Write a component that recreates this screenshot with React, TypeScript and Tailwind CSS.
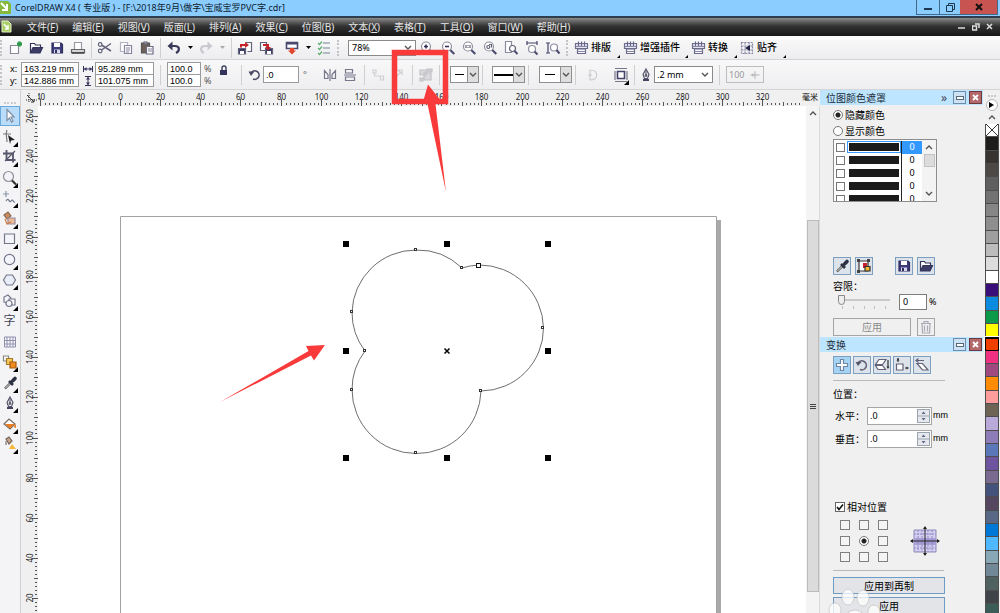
import React, { type ReactNode } from "react";

const FONT = "font-['Noto_Sans','Noto_Sans_CJK_SC',sans-serif]";

function Ico({ children, className = "" }: { children: ReactNode; className?: string }) {
  return (
    <svg viewBox="0 0 16 16" width="16" height="16" fill="none" stroke="#626278" strokeWidth="1.2" aria-hidden="true" className={`shrink-0 ${className}`}>
      {children}
    </svg>
  );
}

const floppy = (
  <>
    <path d="M3 3h9l1.500 1.500V13H3z" fill="#3c3c7a" stroke="#2e2e5e" />
    <path d="M5 3h6v4H5z" fill="#fff" stroke="none" />
    <path d="M5 9.500h6V13H5z" fill="#d8d8ee" stroke="none" />
    <path d="M6 10h2v3H6z" fill="#2e2e5e" stroke="none" />
  </>
);
const folder = (
  <>
    <path d="M2.500 13V3.500h4l1 1.500h5V8" fill="#fff" stroke="#33335c" />
    <path d="M2.500 13l2.500-5.500h9.500L12 13z" fill="#3c3c66" stroke="#33335c" />
  </>
);
const glass = (
  <>
    <circle cx="7" cy="6.500" r="4.500" fill="#fff" stroke="#8f8f9e" />
    <path d="M10.300 10l4 4" stroke="#4a4a70" strokeWidth="2" />
  </>
);
const dropper = (
  <>
    <path d="M3 13.500L9 7.500" stroke="#555" strokeWidth="2.400" />
    <path d="M3.500 13L8.500 8" stroke="#fff" strokeWidth="0.800" />
    <path d="M7 6l4 4M9.500 7l3-3" stroke="#2b3042" strokeWidth="2.600" />
    <path d="M11 5.500l2-2" stroke="#2b3042" strokeWidth="3.600" strokeLinecap="round" />
  </>
);
const pen = (
  <>
    <path d="M8 2l3 5.500-1.500 4h-3L5 7.500z" fill="#eee" stroke="#55556b" />
    <path d="M8 3v5" />
    <circle cx="8" cy="8.500" r="0.800" fill="#333" />
    <path d="M5 13h6" stroke="#444460" strokeWidth="2" />
  </>
);
const plugin = (
  <>
    <path d="M2.500 3.500h12v5h-12z" fill="#e4e4f2" stroke="#6d6d8c" />
    <path d="M4.500 9h8v4.500h-8z" fill="#f6f6fc" stroke="#6d6d8c" />
    <path d="M5.500 1.500v5M8.500 1.500v5M11.500 1.500v5" stroke="#66668a" />
    <path d="M3 6.500h11M5 11.500h7" stroke="#8a8aa8" />
  </>
);

function Tool({ label, children, corner = false }: { label: string; children: ReactNode; corner?: boolean }) {
  return (
    <button type="button" aria-label={label} className="relative flex h-5 w-5 shrink-0 items-center justify-center">
      <Ico>{children}</Ico>
      {corner && <Corner />}
    </button>
  );
}

function Corner() {
  return (
    <svg width="5" height="5" viewBox="0 0 5 5" aria-hidden="true" className="absolute right-[2px] bottom-0">
      <path d="M5 0v5H0z" fill="#000" />
    </svg>
  );
}

function Caret({ tone = "text-black" }: { tone?: string }) {
  return (
    <button type="button" aria-label="More" className={`flex h-5 w-3 shrink-0 items-center justify-center ${tone}`}>
      <svg width="5" height="3" viewBox="0 0 5 3" aria-hidden="true"><path d="M0 0h5L2.500 3z" fill="currentColor" /></svg>
    </button>
  );
}

const Sep = () => <div className="mx-[3px] h-5 w-px shrink-0 bg-[#cfcfd2]" />;
const Grip = () => <div className="mx-[3px] h-4 w-0 shrink-0 border-l-2 border-dotted border-[#c4c4c8]" />;

function Chevron({ d = "M1 2l3 3 3-3" }: { d?: string }) {
  return (
    <svg width="8" height="7" viewBox="0 0 8 7" fill="none" stroke="#555" strokeWidth="1.400" aria-hidden="true"><path d={d} /></svg>
  );
}

const menus = ["文件(F)", "编辑(E)", "视图(V)", "版面(L)", "排列(A)", "效果(C)", "位图(B)", "文本(X)", "表格(T)", "工具(O)", "窗口(W)", "帮助(H)"];

function TitleBar() {
  return (
    <header className="flex h-[18px] shrink-0 items-start border-b-2 border-[#2c3e50] bg-[#8ccdff]">
      <svg width="12" height="14" viewBox="0 0 12 14" aria-hidden="true">
        <path d="M0 1h8l3 3v10H0z" fill="#86b93c" />
        <path d="M1 3l6 6M7 4v6H2" stroke="#fff" strokeWidth="2" fill="none" />
      </svg>
      <h1 className="ml-[3px] flex-1 truncate text-[9px] leading-4 text-[#0c1c2c]">CorelDRAW X4 ( 专业版 ) - [F:\2018年9月\做字\宝威宝罗PVC字.cdr]</h1>
      <div className="mr-[2px] flex h-[15px] border-x border-b border-[#41698a]">
        <button type="button" aria-label="Minimize" className="flex w-[22px] items-end justify-center pb-1"><span className="h-[2px] w-2 bg-[#1c3850]" /></button>
        <button type="button" aria-label="Restore" className="flex w-[21px] items-center justify-center border-l border-[#41698a]">
          <svg width="9" height="9" viewBox="0 0 9 9" fill="none" stroke="#1c3850" aria-hidden="true"><path d="M2.500 2.500v-2h6v6h-2M.5 2.500h6v6h-6z" /></svg>
        </button>
        <button type="button" aria-label="Close" className="flex w-[37px] items-center justify-center bg-[#c75450]">
          <svg width="8" height="8" viewBox="0 0 8 8" stroke="#111" strokeWidth="2" aria-hidden="true"><path d="M1 1l6 6M7 1L1 7" /></svg>
        </button>
      </div>
    </header>
  );
}

function MenuBar() {
  return (
    <nav className="flex h-[18px] shrink-0 items-center bg-linear-to-b from-[#8c8c8c] via-[#333] via-45% to-[#141414]">
      <svg width="14" height="14" viewBox="0 0 14 14" aria-hidden="true">
        <path d="M2 1h6l3 3v8H2z" fill="#a9cf64" stroke="#e3f2c5" />
        <path d="M4 4l4 5M8 5v4H5" stroke="#fff" fill="none" strokeWidth="1.500" />
      </svg>
      <div className="flex flex-1 gap-[14px] pl-[13px]">
        {menus.map((m) => (
          <button key={m} type="button" className="whitespace-nowrap text-[10px] leading-4 text-[#e6e6e6]">
            {m.slice(0, 3)}<u>{m[3]}</u>)
          </button>
        ))}
      </div>
      <div className="flex gap-[6px] pr-[6px]">
        {["M0 5h7", "M0.500 3h4v4h-4zM3 1h4v4", "M1 1l5 5M6 1L1 6"].map((d, i) => (
          <button key={d} type="button" aria-label={["Minimize document", "Restore document", "Close document"][i]}>
            <svg width="8" height="8" viewBox="0 0 8 8" stroke="#ddd" strokeWidth="1.500" fill="none" aria-hidden="true"><path d={d} /></svg>
          </button>
        ))}
      </div>
    </nav>
  );
}

function PluginButton({ text, width, icon = plugin }: { text: string; width: string; icon?: ReactNode }) {
  return (
    <button type="button" className={`relative flex h-5 shrink-0 items-center gap-[2px] whitespace-nowrap text-[10px] font-medium text-black ${width}`}>
      <Ico>{icon}</Ico>
      {text}
      <svg width="3" height="3" viewBox="0 0 3 3" aria-hidden="true" className="absolute right-[2px] bottom-0"><path d="M3 0v3H0z" /></svg>
    </button>
  );
}

function StandardBar() {
  return (
    <div className="flex h-6 shrink-0 items-center border-b border-[#d4d4d6] bg-linear-to-b from-[#fafafa] to-[#ededf0]">
      <div className="h-4 w-[5px] border-l-2 border-dotted border-[#c4c4c8]" />
      <div className="flex gap-px">
        <Tool label="New"><path d="M3.500 5.500h8v8h-8z" fill="#fff" stroke="#8a8a98" /><path d="M12.500 1.500v5M10 4h5" stroke="#2e9b4a" strokeWidth="2.800" /></Tool>
        <Tool label="Open">{folder}</Tool>
        <Tool label="Save">{floppy}</Tool>
        <Tool label="Print"><path d="M4.500 9V2.500h7V9" fill="#fff" stroke="#9a9aa4" /><path d="M1.500 9.500h13v3h-13z" fill="#d5d5d8" stroke="#666" /><path d="M1.500 13h13" stroke="#444" strokeWidth="1.600" /></Tool>
      </div>
      <Sep />
      <div className="flex gap-px">
        <Tool label="Cut"><path d="M14 3.500L4.500 10M14 11L4.500 5" strokeWidth="1.500" /><circle cx="3.200" cy="4.500" r="1.800" /><circle cx="3.200" cy="11" r="1.800" /></Tool>
        <Tool label="Copy"><path d="M2.500 2.500h7v9h-7z" fill="#fff" stroke="#b3b3c4" /><path d="M6.500 5.500h7v8h-7z" fill="#fff" stroke="#8585a0" /><path d="M8 8h4M8 10h4M8 12h3" stroke="#8585a0" /></Tool>
        <Tool label="Paste"><path d="M2.500 3h8v10h-8z" fill="#6e6058" stroke="#555" /><path d="M5 2h3v2H5z" fill="#bbb" /><path d="M7.500 6.500h6.500v7.500H7.500z" fill="#fff" stroke="#6a6a85" /><path d="M9 9h4M9 11h4" stroke="#8585a0" /></Tool>
      </div>
      <Sep />
      <Tool label="Undo"><path d="M4 6h5c5 0 5 5 1 7" stroke="#3a3a58" strokeWidth="2.200" /><path d="M6.500 1.500v9L1.500 6z" fill="#3a3a58" stroke="none" /></Tool>
      <Caret />
      <Tool label="Redo"><path d="M12 6H7c-5 0-5 5-1 7" stroke="#c9c9cf" strokeWidth="2.200" /><path d="M9.500 1.500v9l5-4.500z" fill="#c9c9cf" stroke="none" /></Tool>
      <Caret tone="text-[#aaa]" />
      <Sep />
      <div className="flex gap-px">
        <Tool label="Import"><path d="M1.500 8.500h7v5.500h-7z" fill="#3c3c66" /><path d="M3 11h4v3H3z" fill="#fff" stroke="none" /><path d="M8.500 2.500h6v9h-4" fill="#fff" /><path d="M4 7.500V5h5" stroke="#c8232b" strokeWidth="2" /><path d="M8 2v6l4-3z" fill="#c8232b" stroke="none" /></Tool>
        <Tool label="Export"><path d="M2.500 2.500h6v8h-6z" fill="#fff" /><path d="M7.500 8.500h7v5.500h-7z" fill="#3c3c66" /><path d="M9 11h4v3H9z" fill="#fff" stroke="none" /><path d="M5 5h5v3" stroke="#c8232b" strokeWidth="2" /><path d="M7 7h6l-3 3.500z" fill="#c8232b" stroke="none" /></Tool>
      </div>
      <div className="ml-[6px]"><Tool label="Launch"><path d="M2.500 2.500h11v6h-11z" fill="#fff" stroke="#4a4a70" strokeWidth="1.600" /><path d="M3 3.500h10" stroke="#4a4a70" strokeWidth="2" /><path d="M6 8h4v2.500h2l-4 4-4-4h2z" fill="#e2472b" stroke="none" /></Tool></div>
      <Caret />
      <Tool label="Options"><path d="M7 3h7M7 8h7M7 13h7" stroke="#b3bcc2" strokeWidth="1.800" /><path d="M2 3l1.500 1.500L6 1.500M2 8l1.500 1.500L6 6.500M2 13l1.500 1.500L6 11.500" stroke="#5fae72" /></Tool>
      <Grip />
      <label className="relative ml-[6px] flex h-4 w-[68px] shrink-0 items-center border border-[#8a8a8a] bg-white">
        <select aria-label="Zoom level" className="h-full w-full appearance-none bg-transparent pl-[3px] text-[9px] leading-3 text-black outline-none"><option>78%</option></select>
        <span className="pointer-events-none absolute right-[3px]"><Chevron /></span>
      </label>
      <div className="ml-px flex gap-px">
        <Tool label="Zoom in">{glass}<path d="M5 6.500h4M7 4.500v4" stroke="#33335c" strokeWidth="1.600" /></Tool>
        <Tool label="Zoom out">{glass}<path d="M5 6.500h4" stroke="#33335c" strokeWidth="1.600" /></Tool>
        <Tool label="Zoom 1:1">{glass}<path d="M5 5v3M9 5v3M7 5v1M7 7v1" /></Tool>
        <Tool label="Zoom to selection">{glass}<circle cx="6.300" cy="7" r="1.500" /><path d="M7 4.500h2.500v3" /></Tool>
        <Tool label="Zoom to page"><path d="M2.500 1.500h6v11h-6z" fill="#fff" stroke="#8d8da0" /><circle cx="9.500" cy="8.500" r="3" fill="#fff" /><path d="M11.500 11l3 3" stroke="#4a4a70" strokeWidth="2" /></Tool>
        <Tool label="Zoom to width"><path d="M3 1v4M13 1v4M3 3h10" stroke="#44446a" /><circle cx="8" cy="9" r="3.500" fill="#fff" stroke="#8d8da0" /><path d="M10.500 11.500l3 3" stroke="#4a4a70" strokeWidth="2" /></Tool>
        <Tool label="Zoom to height"><path d="M1 3h4M1 13h4M3 3v10" stroke="#44446a" /><circle cx="9" cy="7.500" r="3.500" fill="#fff" stroke="#8d8da0" /><path d="M11.500 10l3 3.500" stroke="#4a4a70" strokeWidth="2" /></Tool>
      </div>
      <Grip />
      <div className="ml-[2px] flex">
        <PluginButton text="排版" width="w-[49px]" />
        <PluginButton text="增强插件" width="w-[68px]" />
        <PluginButton text="转换" width="w-[49px]" />
        <PluginButton text="贴齐" width="w-[49px]" icon={<><path d="M2.500 2.500h11v11h-11zM2.500 6h11M2.500 10h11M6 2.500v11M10 2.500v11" strokeDasharray="2 1" stroke="#8888a5" /><path d="M11 5v6L6 8z" fill="#22224a" stroke="none" /></>} />
      </div>
    </div>
  );
}

function NumBox({ label, value, width, className = "" }: { label: string; value: string; width: string; className?: string }) {
  return (
    <input aria-label={label} defaultValue={value} className={`block h-[13px] border border-[#9a9a9a] bg-white pl-[2px] font-['Liberation_Sans',sans-serif] text-[9px] leading-[11px] text-black outline-none ${width} ${className}`} />
  );
}

function LineSelect({ label, width, line, thick = false }: { label: string; width: string; line: string; thick?: boolean }) {
  return (
    <label className={`relative flex h-[17px] shrink-0 items-center border border-[#8f8f8f] bg-white ${width}`}>
      <select aria-label={label} className="absolute inset-0 appearance-none opacity-0"><option>{label}</option></select>
      <span className="flex flex-1 items-center justify-center"><span className={`${line} ${thick ? "h-[2px]" : "h-px"} bg-black`} /></span>
      <span className="flex h-full w-[11px] items-center justify-center border-l border-[#8f8f8f] bg-[#dedede]"><Chevron /></span>
    </label>
  );
}

function PropertyBar() {
  return (
    <div className="flex h-[30px] shrink-0 items-center border-b border-[#d4d4d6] bg-linear-to-b from-[#f8f8f9] to-[#eeeef0] text-[9px] text-black">
      <div className="h-5 w-[10px] border-l-2 border-dotted border-[#c4c4c8]" />
      <div className="grid w-[11px] shrink-0 leading-[12px]"><span>x:</span><span>y:</span></div>
      <div className="shrink-0"><NumBox label="x" value="163.219 mm" width="w-[58px]" /><NumBox label="y" value="142.886 mm" width="w-[58px]" className="-mt-px" /></div>
      <svg width="16" height="24" viewBox="0 0 16 24" stroke="#33335c" fill="#33335c" className="shrink-0" aria-hidden="true">
        <path d="M4.500 3v6M13.500 3v6M5 6h8M9 13v9M6 13.500h6M6 22.500h6" /><path d="M5 6l2.500-2v4zM13 6l-2.500-2v4zM9 14l2 2.500H7zM9 22l2-2.500H7z" stroke="none" />
      </svg>
      <div className="shrink-0"><NumBox label="Width" value="95.289 mm" width="w-[59px]" /><NumBox label="Height" value="101.075 mm" width="w-[59px]" className="-mt-px" /></div>
      <div className="ml-[3px]"><Sep /></div>
      <div className="ml-[3px] shrink-0"><NumBox label="Scale x" value="100.0" width="w-[34px]" /><NumBox label="Scale y" value="100.0" width="w-[34px]" className="-mt-px" /></div>
      <div className="ml-[3px] grid w-[14px] shrink-0 leading-[12px] text-[#555]"><span>%</span><span>%</span></div>
      <button type="button" aria-label="Lock ratio" className="mb-2 shrink-0">
        <svg width="12" height="12" viewBox="0 0 12 12" aria-hidden="true"><path d="M4 5V3a2 2 0 014 0v2" fill="none" stroke="#3a3a5c" strokeWidth="1.400" /><path d="M2 5h7v5H2z" fill="#33335c" /></svg>
      </button>
      <div className="ml-2"><Sep /></div>
      <div className="w-[2px]" />
      <Ico><path d="M4 6a4.300 4.300 0 112 6" stroke="#4a4a66" strokeWidth="1.600" /><path d="M1.500 4.500h6L4 9z" fill="#4a4a66" stroke="none" /></Ico>
      <NumBox label="Rotation" value=".0" width="w-9" className="h-[17px] shrink-0" />
      <span className="ml-1 w-[17px] shrink-0 text-[#555]">°</span>
      <Tool label="Mirror horizontally"><path d="M2.500 3.500v8h3.500v-4zM13.500 3.500v8H10v-4zM8 2v12" stroke="#77778c" /></Tool>
      <Tool label="Mirror vertically"><path d="M3.500 2.500h7v3.500h-7zM3.500 10h9v3.500h-9zM2 8h12" stroke="#77778c" /></Tool>
      <div className="ml-px"><Sep /></div>
      <Tool label="Break"><path d="M3 3h3v3H3zM4.500 6v3h7M10.500 9h3v4h-3z" stroke="#cfcfd4" /></Tool>
      <Tool label="Join"><path d="M3 13l7-7M8 3h4v4z" stroke="#cfcfd4" /></Tool>
      <div className="ml-px"><Sep /></div>
      <Tool label="Ungroup"><path d="M2 3h6v5H2zM6 6h7v7H6z" fill="#dadadd" stroke="#c2c2c6" /><path d="M9 2h5v3H9zM2 11h3v3H2z" fill="#d0d0d4" stroke="#c2c2c6" /></Tool>
      <Sep />
      <div className="ml-[7px]"><LineSelect label="Start arrowhead" width="w-[29px]" line="w-[9px]" /></div>
      <Sep />
      <div className="ml-[6px]"><LineSelect label="Line style" width="w-[33px]" line="w-[19px]" thick /></div>
      <Sep />
      <div className="ml-[7px]"><LineSelect label="End arrowhead" width="w-[33px]" line="w-[10px]" /></div>
      <Sep />
      <div className="ml-1"><Tool label="Close curve"><path d="M5 2.500v11M5 3c9 0 9 10 0 10M3 8h4" stroke="#cacad0" /></Tool></div>
      <div className="ml-2"><Tool label="Wrap text" corner><path d="M4.500 4.500h7v7h-7z" fill="#fff" stroke="#44446a" strokeWidth="1.600" /><path d="M2 1.500h12M2 14.500h12M2 4v9M14 4v9" stroke="#77778a" /></Tool></div>
      <Sep />
      <Ico>{pen}</Ico>
      <label className="relative flex h-[17px] w-[59px] shrink-0 items-center border border-[#8a8a8a] bg-white">
        <select aria-label="Outline width" className="h-full w-full appearance-none bg-transparent pl-[2px] text-[9px] leading-3 outline-none"><option>.2 mm</option></select>
        <span className="pointer-events-none absolute right-[3px]"><Chevron /></span>
      </label>
      <div className="ml-[3px]"><Sep /></div>
      <div className="ml-[3px] flex h-[17px] w-[38px] shrink-0 items-center border border-[#bdbdbd] text-[#999]">
        <input aria-label="Smoothness" disabled defaultValue="100" className="w-[22px] bg-transparent pl-[2px]" />
        <Ico className="w-3"><path d="M2 8h12M8 3v10M5 6v4" stroke="#aaa" /></Ico>
      </div>
    </div>
  );
}

const toolbox: { label: string; corner?: boolean; art: ReactNode }[] = [
  { label: "Pick", art: <path d="M5 1.500v11l2.500-2.500 2 4 1.500-1-2-4h3z" fill="#fff" stroke="#7f8fa2" /> },
  { label: "Shape", corner: true, art: <><path d="M5 1c-2 4 0 7 0 12M1 5h8" stroke="#777" /><path d="M6 6l7 5-4 .5L8 15z" fill="#222" stroke="none" /></> },
  { label: "Crop", corner: true, art: <><path d="M4.500 1v10h9M1 4.500h10v9" stroke="#55556b" strokeWidth="1.800" /><path d="M13 2L3 12" stroke="#55556b" /></> },
  { label: "Zoom", corner: true, art: <><circle cx="6.500" cy="6.500" r="5" fill="#f4f4f8" stroke="#8f8f9e" /><path d="M10 10.500l4 4" stroke="#333" strokeWidth="2.200" /></> },
  { label: "Freehand", corner: true, art: <><path d="M4 1v6M1 4h6" stroke="#8b97a8" /><path d="M4 11c3-5 3 3 5 0s2 2 4 1" stroke="#6b7788" /></> },
  { label: "Smart fill", corner: true, art: <><path d="M2 4l4-3 3 4-4 3z" fill="#cf8a5a" stroke="#8a6a58" /><path d="M6 7h7v6H6z" fill="#e8b898" stroke="#9a8a9a" /><path d="M3 8l2 5 4-2" stroke="#cf7a3a" /></> },
  { label: "Rectangle", corner: true, art: <path d="M2.500 3h10v9.500h-10z" fill="#f3f5fb" stroke="#77778c" /> },
  { label: "Ellipse", corner: true, art: <circle cx="7.500" cy="7.500" r="5.200" fill="#f3f5fb" stroke="#77778c" /> },
  { label: "Polygon", corner: true, art: <path d="M4.500 3h6l3 5-3 5h-6l-3-5z" fill="#e9edf8" stroke="#77778c" /> },
  { label: "Basic shapes", corner: true, art: <><path d="M2 4l4-2 3 3-3 5-4-1z" fill="#f3f5fb" stroke="#77778c" /><path d="M7 6h6v6H7z" fill="#fff" stroke="#77778c" /><circle cx="7" cy="10.500" r="3" fill="#f3f5fb" stroke="#77778c" /></> },
  { label: "Text", art: null },
  { label: "Table", art: <path d="M2.500 3h11v10h-11zM2.500 6.500h11M2.500 10h11M5 3v10M8 3v10M11 3v10" fill="#f7f7fd" stroke="#9090ad" strokeWidth="1" /> },
  { label: "Blend", corner: true, art: <><path d="M1.500 2h5v5h-5z" fill="#fff" stroke="#888" /><path d="M4.500 4.500h6v6h-6z" fill="#f6c95a" stroke="#a37a28" /><path d="M8 8h6v6H8z" fill="#f08a1e" stroke="#a85a10" /></> },
  { label: "Eyedropper", corner: true, art: dropper },
  { label: "Outline", corner: true, art: pen },
  { label: "Fill", corner: true, art: <><path d="M2 8l5-5 6 5-5 5z" fill="#fff" stroke="#776a60" /><path d="M3 8h9.500L8 12.500z" fill="#ea7d1e" stroke="none" /><path d="M13 8c2 2 1 4 0 4s-1-2 0-4" fill="#ea7d1e" stroke="none" /></> },
  { label: "Interactive fill", corner: true, art: <><path d="M4 3l3-2 3 4-3 3z" fill="#c9a088" stroke="#77665a" /><path d="M10 8l4 5H7z" fill="#f7b93a" stroke="none" /><path d="M4 5v4" stroke="#777" /></> },
];

function Toolbox() {
  return (
    <aside className="flex w-[21px] shrink-0 flex-col border-r border-[#cfcfd2] bg-[#f4f4f6]">
      <div className="mx-1 mt-3 mb-[2px] border-t-2 border-dotted border-[#cdcdd0]" />
      <div className="flex h-[348px] flex-col justify-between">
        {toolbox.map((t, i) => (
          <button key={t.label} type="button" aria-label={t.label} className={`relative flex h-5 items-center justify-center pr-px ${i === 0 ? "border border-[#69a9dc] bg-[#b8dcfa]" : ""}`}>
            {t.art ? <Ico>{t.art}</Ico> : <span className="text-[12px] leading-4 text-[#444458]">字</span>}
            {t.corner && <Corner />}
          </button>
        ))}
      </div>
    </aside>
  );
}

const UNIT = 40.15;
const across = Array.from({ length: 19 }, (_, i) => i - 2);
const down = Array.from({ length: 13 }, (_, i) => i);
const minor = [1, 2, 3, 4, 5, 6, 7, 8, 9];

function TopRuler() {
  return (
    <div className="flex h-4 shrink-0 bg-[#f0f0f1]">
      <svg width="17" height="16" viewBox="0 0 17 16" stroke="#333" fill="none" className="shrink-0" aria-hidden="true">
        <path d="M8 3v10M5 10h11" strokeDasharray="1 1" /><path d="M6 5l7 7M13 9v3h-3" />
      </svg>
      <svg height="16" className="min-w-0 flex-1" aria-label="Horizontal ruler">
        {across.map((n) => {
          const x = Math.round(82 + n * UNIT) + 0.5;
          return (
            <g key={n}>
              <path d={`M${x} 9v7${minor.map((m) => `M${Math.round(x + (m * UNIT) / 10) + 0.5} ${m === 5 ? 12 : 13}v${m === 5 ? 4 : 2}`).join("")}`} stroke="#555" />
              <text x={x} y="10" fontSize="8" textAnchor="middle" fill="#222">{Math.abs(n * 20)}</text>
            </g>
          );
        })}
      </svg>
      <span className="w-[18px] shrink-0 text-[8px] leading-[14px] whitespace-nowrap text-black">毫米</span>
    </div>
  );
}

function SideRuler() {
  return (
    <svg width="17" className="h-full shrink-0 bg-[#f0f0f1]" aria-label="Vertical ruler">
      {down.map((i) => {
        const y = Math.round(10 + i * 40.2);
        return (
          <g key={i}>
            <path d={`M11 ${y + 0.5}h6${minor.map((m) => `M${m === 5 ? 13 : 14} ${Math.round(y + m * 4.02) + 0.5}h${m === 5 ? 4 : 2}`).join("")}`} stroke="#555" />
            <text x="12" y={y} fontSize="8" fill="#222" textAnchor="middle" transform={`rotate(-90 12 ${y})`}>{260 - i * 20}</text>
          </g>
        );
      })}
    </svg>
  );
}

const nodes = [[352, 312], [416, 250], [462, 268], [543, 328], [481, 391], [416, 453], [352, 390], [365, 351]];
const handles = [[346, 244], [447, 244], [548, 244], [346, 351], [548, 351], [346, 458], [447, 458], [548, 458]];

function Drawing() {
  return (
    <svg className="h-full min-w-0 flex-1 bg-white" aria-label="Drawing canvas">
      <g transform="translate(-38 -106)">
        <path d="M717 220h4v900h-4z" fill="#a9a9a9" />
        <path d="M120.500 1000V216.500h596V1000" fill="none" stroke="#a2a2a2" />
        <path d="M365 351A64 64 0 0 1 352 312A64 64 0 0 1 416 250A64 64 0 0 1 462 268A63 63 0 0 1 479 265A64 64 0 0 1 543.500 328A63 63 0 0 1 481 391A64 64 0 0 1 416 453.500A64 64 0 0 1 352 389A64 64 0 0 1 365 351z" fill="none" stroke="#6e6e6e" />
        {nodes.map(([x, y]) => <rect key={`${x}-${y}`} x={x - 1.5} y={y - 1.5} width="2" height="2" fill="#fff" stroke="#333" />)}
        <rect x="476.500" y="263.500" width="4" height="4" fill="#fff" stroke="#111" />
        {handles.map(([x, y]) => <rect key={`${x}-${y}`} x={x - 3} y={y - 3} width="6" height="6" fill="#000" />)}
        <path d="M444.500 348.500l5 5M449.500 348.500l-5 5" stroke="#000" strokeWidth="1.500" />
        <path d="M325 345L306 346L308.500 351L220 402L311 355.500L314 360.500z" fill="#f93a3a" />
      </g>
    </svg>
  );
}

function DockHeader({ title, arrows = false }: { title: string; arrows?: boolean }) {
  return (
    <div className="flex h-[15px] shrink-0 items-center bg-[#bde5ff] pr-px pl-[6px]">
      <h2 className="flex-1 text-[10px] leading-[14px] text-[#1d2b38]">{title}</h2>
      {arrows && <span className="mr-[6px] text-[12px] leading-[12px] text-[#445]">»</span>}
      <button type="button" aria-label={`Collapse ${title}`} className="mr-[3px] flex h-[13px] w-[13px] items-center justify-center border border-[#6c8cab] bg-[#cfe2f3]"><span className="h-1 w-2 border border-[#55697d] bg-white" /></button>
      <button type="button" aria-label={`Close ${title}`} className="flex h-[13px] w-[13px] items-center justify-center border border-[#6c3a3e] bg-[#b4686c]">
        <svg width="7" height="7" viewBox="0 0 7 7" stroke="#fff" strokeWidth="1.800" aria-hidden="true"><path d="M1 1l5 5M6 1L1 6" /></svg>
      </button>
    </div>
  );
}

function DockButton({ label, children, active = false }: { label: string; children: ReactNode; active?: boolean }) {
  return (
    <button type="button" aria-label={label} className={`flex h-[18px] w-[18px] items-center justify-center border border-[#7d9fc0] ${active ? "bg-[#a5d3f3]" : "bg-[#dde3ea]"}`}>
      <Ico>{children}</Ico>
    </button>
  );
}

const radio = "h-[10px] w-[10px] shrink-0 appearance-none rounded-full border border-[#777] bg-white checked:bg-[radial-gradient(circle,#222_0_2px,#fff_3px)]";

function MaskPanel() {
  return (
    <section className="flex h-[232px] shrink-0 flex-col pl-[13px] text-[10px] text-black">
      <label className="mt-[2px] flex h-4 items-center gap-[2px]"><input type="radio" name="mask" defaultChecked className={radio} />隐藏颜色</label>
      <label className="flex h-4 items-center gap-[2px]"><input type="radio" name="mask" className={radio} />显示颜色</label>
      <div className="flex h-[63px] w-[104px] overflow-hidden border border-[#8d8d8d] bg-white">
        <ul className="flex-1 pt-px">
          {[0, 1, 2, 3, 4].map((i) => (
            <li key={i} className="mb-px flex h-[12px] items-center pl-[2px]">
              <input type="checkbox" aria-label={`Colour ${i + 1}`} className="h-[9px] w-[9px] shrink-0 appearance-none border border-[#777]" />
              <span className={`ml-[2px] flex h-3 w-[54px] items-center border p-px ${i === 0 ? "border-[#3399ff]" : "border-transparent"}`}><span className="h-[8px] flex-1 bg-[#1b1b1b]" /></span>
              <span className={`h-[13px] flex-1 border-l border-[#222] text-center text-[9px] leading-[12px] ${i === 0 ? "bg-[#3399ff] text-white" : ""}`}>0</span>
            </li>
          ))}
        </ul>
        <div className="flex w-[14px] flex-col items-center justify-between bg-[#f3f3f3] py-1">
          <div className="flex flex-col items-center gap-[3px]"><Chevron d="M1 5l3-3 3 3" /><span className="h-[13px] w-[11px] border border-[#c2c2c2] bg-[#dcdcdc]" /></div>
          <Chevron />
        </div>
      </div>
      <div className="mt-[55px] flex gap-1">
        <DockButton label="Pick colour">{dropper}</DockButton>
        <DockButton label="Edit colour"><path d="M3 3h9v10H3z" fill="#fff" stroke="#333" /><path d="M1 1h3v3H1zM11 1h3v3h-3zM1 12h3v3H1z" fill="#444" stroke="none" /><path d="M7 5h4v5H7z" fill="#c8232b" stroke="none" /><path d="M9 8.500h5v4.500H9z" fill="#f5b82e" stroke="#333" /></DockButton>
        <div className="w-[14px]" />
        <DockButton label="Save mask">{floppy}</DockButton>
        <DockButton label="Open mask">{folder}</DockButton>
      </div>
      <div className="mt-1 leading-[14px]">容限：</div>
      <div className="flex h-[17px] items-center">
        <div className="flex w-[66px] flex-col pl-[5px]">
          <input type="range" aria-label="容限" defaultValue="0" className="h-[12px] w-[52px] appearance-none bg-[linear-gradient(#c9c9c9,#c9c9c9)] bg-[length:100%_2px] bg-center bg-no-repeat [&::-webkit-slider-thumb]:h-[10px] [&::-webkit-slider-thumb]:w-[7px] [&::-webkit-slider-thumb]:appearance-none [&::-webkit-slider-thumb]:rounded-b-sm [&::-webkit-slider-thumb]:border [&::-webkit-slider-thumb]:border-[#888] [&::-webkit-slider-thumb]:bg-[#eee]" />
          <div className="flex h-[3px] w-[48px] justify-between pl-1">{[0, 1, 2, 3, 4].map((i) => <span key={i} className="w-px bg-[#c0c0c0]" />)}</div>
        </div>
        <input aria-label="容限 %" defaultValue="0" className="h-4 w-[28px] border border-[#7c7c7c] bg-white pl-[3px] text-[9px] outline-none" />
        <span className="ml-[2px] text-[9px]">%</span>
      </div>
      <div className="mt-2 flex gap-[6px]">
        <button type="button" className="h-[18px] w-[78px] border border-[#a5a5a5] text-[#8b8b8b]">应用</button>
        <button type="button" aria-label="Delete" className="flex h-[18px] w-[18px] items-center justify-center border border-[#a5a5a5]"><Ico><path d="M3 4.500h10M6 4V2.500h4V4M4 5l.5 9h7l.5-9M6.500 6.500v6M9.500 6.500v6" stroke="#a9a9b5" /></Ico></button>
      </div>
    </section>
  );
}

function Offset({ label }: { label: string }) {
  return (
    <label className="mb-[5px] flex h-[18px] items-center pl-[2px]">
      <span className="w-[32px] whitespace-nowrap">{label}：</span>
      <span className="flex h-[18px] w-[65px] border border-[#a5a5a5] bg-white p-px">
        <input defaultValue=".0" className="min-w-0 flex-1 bg-transparent pl-[1px] text-[9px] outline-none" />
        <span className="grid w-[13px] border border-[#9aa5b0] bg-[#e6e8ee]">
          <svg width="11" height="12" viewBox="0 0 11 12" aria-hidden="true"><path d="M5.500 1.500l2 2.500h-4zM5.500 10.500l2-2.500h-4z" fill="#5c6888" /><path d="M0 6h11" stroke="#9aa5b0" /></svg>
        </span>
      </span>
      <span className="ml-px font-['Liberation_Sans',sans-serif] text-[9px]">mm</span>
    </label>
  );
}

function TransformPanel() {
  return (
    <section className="flex flex-1 shrink-0 flex-col pt-1 pl-[13px] text-[10px] text-black">
      <div className="flex gap-[2px]">
        <DockButton label="Position" active><path d="M6.500 2.500h3v4h4v3h-4v4h-3v-4h-4v-3h4z" fill="#fff" stroke="#6d86a5" /></DockButton>
        <DockButton label="Rotate"><path d="M4 6a4.500 4.500 0 112 6.500" strokeWidth="1.600" /><path d="M1.500 5h6L4 9z" fill="#55556b" stroke="none" /></DockButton>
        <DockButton label="Scale and mirror"><path d="M5 2.500h7l-3.500 5h-7zM1.500 8.500h7l3 4H4z" fill="#fff" /><path d="M14 3v8" stroke="#333" /><path d="M12.500 9.500h3L14 12z" fill="#333" stroke="none" /></DockButton>
        <DockButton label="Size"><path d="M2.500 7h6.500v6H2.500z" fill="#fff" /><path d="M4 1v4M11 11h3" stroke="#333" /><path d="M2.500 3.500h3L4 1zM12.500 9.500v3l2.500-1.500z" fill="#333" stroke="none" /></DockButton>
        <DockButton label="Skew"><path d="M3 6.500h5.500l5.500 6.500H8.500z" fill="#fff" /><path d="M2 3.500h8M4.500 1.500L2 3.500l2.500 2" /></DockButton>
      </div>
      <hr className="mt-[6px] w-[112px] border-[#b9b9b9]" />
      <div className="mt-[6px] mb-[6px] leading-[14px]">位置：</div>
      <Offset label="水平" />
      <Offset label="垂直" />
      <label className="mt-[46px] flex h-4 items-center gap-[2px] pl-[2px]">
        <span className="relative flex h-[10px] w-[10px]">
          <input type="checkbox" defaultChecked className="h-[10px] w-[10px] appearance-none border border-[#666] bg-white" />
          <svg viewBox="0 0 10 10" width="10" height="10" fill="none" stroke="#111" strokeWidth="1.600" aria-hidden="true" className="pointer-events-none absolute inset-0"><path d="M2 5l2 2.500L8 2.500" /></svg>
        </span>
        相对位置
      </label>
      <div className="mt-[5px] flex items-center gap-[22px] pl-[7px]">
        <div className="grid grid-cols-3 gap-x-[9px] gap-y-[6px]">
          {Array.from({ length: 9 }, (_, i) => i).map((i) => (
            <input key={i} type={i === 4 ? "radio" : "checkbox"} aria-label={`Anchor ${i + 1}`} defaultChecked={i === 4} className={i === 4 ? radio : "h-[10px] w-[10px] appearance-none border border-[#808080] bg-[#f5f5f5]"} />
          ))}
        </div>
        <svg width="30" height="30" viewBox="0 0 30 30" aria-hidden="true">
          <path d="M4 4h22v22H4z" fill="#d3cff0" stroke="#8f88b8" />
          <path d="M4 12h22v7H4z" fill="#a79ed6" />
          <path d="M4 8h22M4 22h22M8 4v22M12 4v22M18 4v22M22 4v22" stroke="#9389c6" strokeDasharray="2 1" />
          <path d="M15 1v28M1 15h28" stroke="#222" />
          <path d="M15 0l2 3h-4zM15 30l2-3h-4zM0 15l3-2v4zM30 15l-3-2v4z" fill="#222" />
        </svg>
      </div>
      <hr className="mt-2 w-[111px] border-[#b9b9b9]" />
      <button type="button" className="mt-[6px] h-[17px] w-[112px] shrink-0 border border-[#6f9cc4] bg-[#e2e4e8] leading-[14px]">应用到再制</button>
      <button type="button" className="mt-[3px] h-[17px] w-[112px] shrink-0 border border-[#6f9cc4] bg-[#e2e4e8] leading-[14px]">应用</button>
    </section>
  );
}

const palette = [
  "none", "#1f1d1b", "#373330", "#4b4846", "#5f5f5f", "#727272", "#868686", "#8e8e8e", "#9f9f9f", "#bcbcbc", "#dcdcdc", "#ffffff",
  "#3b0f7a", "#0a8be0", "#0a9a4a", "#ffff00", "#f04000", "#f03080", "#a04880", "#ff8c00", "#ff9c9c", "#6e6455", "#b8a9d9", "#8e7cb8",
  "#5a78b8", "#6f55a0", "#7a6a90", "#44527c", "#54465f", "#5a6888", "#0078d8", "#50b8ff", "#88a8b8", "#708898", "#4f625f", "#404348",
  "#3c5c58", "#2f4a46", "#26403c",
];

function Palette() {
  return (
    <aside className="flex w-[17px] shrink-0 flex-col items-center overflow-hidden bg-[#f0f0f1] pt-[5px]">
      <div className="w-2 border-t-2 border-dotted border-[#c8c8c8]" />
      <button type="button" aria-label="Palette menu" className="mt-[2px] flex h-3 w-3 shrink-0 items-center justify-center rounded-full border border-[#b5b5b5] bg-white">
        <svg width="5" height="6" viewBox="0 0 5 6" aria-hidden="true"><path d="M0 0l5 3-5 3z" /></svg>
      </button>
      <button type="button" aria-label="Scroll palette" className="my-[3px] shrink-0"><Chevron d="M1 5l3-3 3 3" /></button>
      {Array.from({ length: 13 }, (_, g) => g).map((g) => (
        <div key={g} className="flex h-[40px] w-[14px] shrink-0 flex-col">
          {palette.slice(g * 3, g * 3 + 3).map((c) => (
            <button key={c} type="button" aria-label={`Colour ${c}`} className={`flex-1 border-x border-b ${c === "#f04000" ? "border-2 border-black outline outline-white" : "border-[#4d4d4d]"}`} style={{ backgroundColor: c === "none" ? "#fff" : c }}>
              {c === "none" && <svg viewBox="0 0 12 12" width="12" height="12" stroke="#333" aria-hidden="true"><path d="M0 0l12 12M12 0L0 12" /></svg>}
            </button>
          ))}
        </div>
      ))}
    </aside>
  );
}

export default function App() {
  return (
    <div className={`relative flex h-screen flex-col overflow-hidden bg-[#f0f0f1] ${FONT}`}>
      <TitleBar />
      <MenuBar />
      <StandardBar />
      <PropertyBar />
      <main className="flex min-h-0 flex-1">
        <Toolbox />
        <div className="flex min-w-0 flex-1 flex-col">
          <TopRuler />
          <div className="flex min-h-0 flex-1">
            <SideRuler />
            <Drawing />
            <div className="flex w-[14px] shrink-0 flex-col items-center border-r border-[#dadada] bg-[#f4f4f4] pt-1">
              <Chevron d="M1 5l3-3 3 3" />
              <div className="mt-[103px] mb-[21px] flex w-3 flex-1 flex-col items-center justify-center gap-px border border-[#bcbcbc] bg-[#dbdbdb]">
                {[0, 1, 2].map((i) => <span key={i} className="h-px w-[6px] bg-[#444]" />)}
              </div>
            </div>
          </div>
        </div>
        <div className="flex w-[163px] shrink-0 flex-col overflow-hidden">
          <DockHeader title="位图颜色遮罩" arrows />
          <MaskPanel />
          <DockHeader title="变换" />
          <TransformPanel />
        </div>
        <Palette />
      </main>
      <svg aria-hidden="true" className="pointer-events-none absolute inset-0 h-full w-full">
        <path d="M394.500 52.500h51v49h-51z" fill="none" stroke="#f93a3a" strokeWidth="5.500" />
        <path d="M428 84.500L441 101L435.500 104L446 192L427.500 104L423 102z" fill="#f93a3a" />
        <g fill="#fff" fillOpacity="0.750" stroke="#bbb" strokeOpacity="0.600">
          <ellipse cx="848" cy="597" rx="6" ry="8" /><ellipse cx="863" cy="598" rx="6" ry="8" />
          <ellipse cx="835" cy="610" rx="6" ry="7" /><ellipse cx="874" cy="612" rx="6" ry="7" /><ellipse cx="855" cy="619" rx="10" ry="9" />
        </g>
      </svg>
    </div>
  );
}
